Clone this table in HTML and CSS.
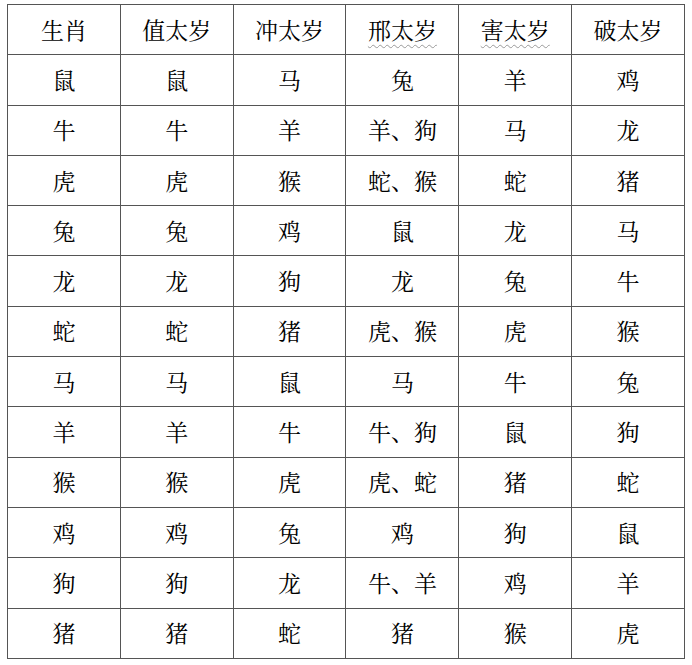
FILE: index.html
```html
<!DOCTYPE html>
<html lang="zh-CN">
<head>
<meta charset="utf-8">
<title>太岁</title>
<link rel="stylesheet" href="styles.css">
</head>
<body>
<table class="tbl">
<thead>
<tr><th>生肖</th><th>值太岁</th><th>冲太岁</th><th><span class="wavy">邢太岁</span></th><th><span class="wavy">害太岁</span></th><th>破太岁</th></tr>
</thead>
<tbody>
<tr><td>鼠</td><td>鼠</td><td>马</td><td>兔</td><td>羊</td><td>鸡</td></tr>
<tr><td>牛</td><td>牛</td><td>羊</td><td>羊、狗</td><td>马</td><td>龙</td></tr>
<tr><td>虎</td><td>虎</td><td>猴</td><td>蛇、猴</td><td>蛇</td><td>猪</td></tr>
<tr><td>兔</td><td>兔</td><td>鸡</td><td>鼠</td><td>龙</td><td>马</td></tr>
<tr><td>龙</td><td>龙</td><td>狗</td><td>龙</td><td>兔</td><td>牛</td></tr>
<tr><td>蛇</td><td>蛇</td><td>猪</td><td>虎、猴</td><td>虎</td><td>猴</td></tr>
<tr><td>马</td><td>马</td><td>鼠</td><td>马</td><td>牛</td><td>兔</td></tr>
<tr><td>羊</td><td>羊</td><td>牛</td><td>牛、狗</td><td>鼠</td><td>狗</td></tr>
<tr><td>猴</td><td>猴</td><td>虎</td><td>虎、蛇</td><td>猪</td><td>蛇</td></tr>
<tr><td>鸡</td><td>鸡</td><td>兔</td><td>鸡</td><td>狗</td><td>鼠</td></tr>
<tr><td>狗</td><td>狗</td><td>龙</td><td>牛、羊</td><td>鸡</td><td>羊</td></tr>
<tr><td>猪</td><td>猪</td><td>蛇</td><td>猪</td><td>猴</td><td>虎</td></tr>
</tbody>
</table>
</body>
</html>
```
FILE: styles.css
```css
html, body {
  margin: 0;
  padding: 0;
  background: #fff;
}
body {
  padding: 4px 0 0 7px;
  font-family: "Noto Serif CJK SC", "AR PL UMing CN", "Noto Sans CJK SC", serif;
  color: #000;
}
.tbl {
  border-collapse: collapse;
  width: 678px;
  table-layout: fixed;
}
.tbl th, .tbl td {
  border: 1px solid #555;
  height: 49.3px;
  padding: 0;
  text-align: center;
  vertical-align: middle;
  font-size: 23px;
  font-weight: normal;
  line-height: 26px;
}
.wavy {
  text-decoration: underline wavy #9a9a9a;
  text-decoration-thickness: 1px;
  text-underline-offset: 5px;
}
```
